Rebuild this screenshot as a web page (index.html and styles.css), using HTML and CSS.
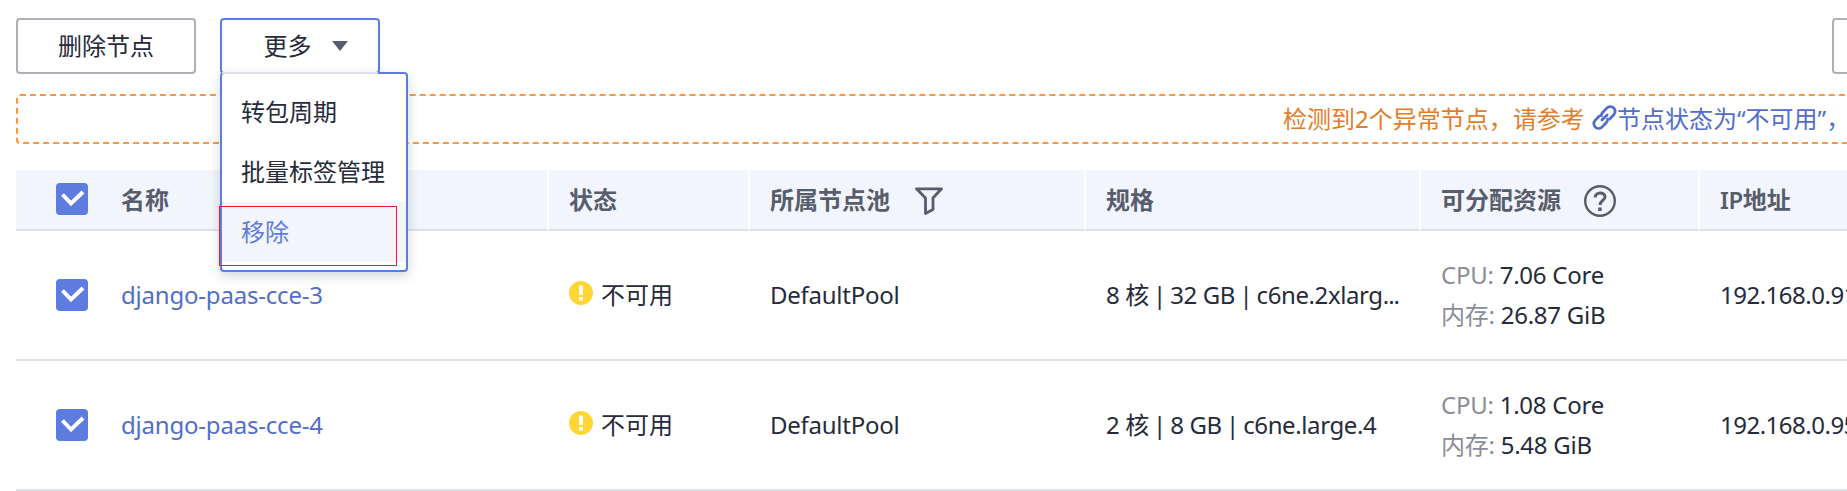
FILE: index.html
```
<!DOCTYPE html>
<html lang="zh-CN">
<head>
<meta charset="utf-8">
<title>节点管理</title>
<link rel="stylesheet" href="styles.css">
</head>
<body>
<svg class="defs" width="0" height="0">
  <symbol id="check" viewBox="0 0 32 32"><path d="M6.500 11.500l8.500 9 12-11.500" fill="none" stroke="#fff" stroke-width="4"/></symbol>
  <symbol id="warn" viewBox="0 0 24 24"><circle cx="12" cy="12" r="12" fill="#ffd735"/><path d="M10.100 4.500h3.800v9.500h-3.800zM10.100 16h3.800v3.500h-3.800z" fill="#fff"/></symbol>
</svg>
<main class="page">
  <div class="toolbar">
    <button class="btn btn-delete">删除节点</button>
    <div class="dropdown">
      <button class="btn btn-more">更多<svg class="caret" viewBox="0 0 16 10"><path d="M0 0h16L8 10z" fill="#575d6c"/></svg></button>
      <div class="menu">
        <div class="menu-item">转包周期</div>
        <div class="menu-item">批量标签管理</div>
        <div class="menu-item active">移除</div>
        <div class="highlight"></div>
      </div>
    </div>
    <button class="btn btn-right" aria-label="操作"></button>
  </div>
  <div class="notice"><span class="notice-text">检测到2个异常节点，请参考</span><svg class="link-icon" viewBox="0 0 24 24"><g fill="none" stroke="#526ecc" stroke-width="2.700" stroke-linecap="round" stroke-linejoin="round"><path d="M9 10.500a4.500 4.500 0 0 1 1.200-3.300l4-4.200a4.200 4.200 0 0 1 6.800 6.200l-4 4.200"/><path d="M15 13.500a4.500 4.500 0 0 1-1.200 3.300l-4 4.200a4.200 4.200 0 0 1-6.800-6.200l4-4.200"/><path d="M9.500 14.500l5-5"/></g></svg><a class="notice-link">节点状态为“不可用”，</a></div>
  <div class="table">
    <div class="row head">
      <div class="cell first"><svg class="checkbox"><use href="#check"/></svg><span>名称</span></div>
      <div class="cell">状态</div>
      <div class="cell">所属节点池<svg class="filter" viewBox="0 0 28 28"><path d="M1.500 1.800h25l-8.500 9.200v11.500l-7.500 4v-15.500z" fill="none" stroke="#575d6c" stroke-width="2.800" stroke-linejoin="round"/></svg></div>
      <div class="cell">规格</div>
      <div class="cell"><span>可分配资源</span><svg class="help" viewBox="0 0 32 32"><g fill="none" stroke="#575d6c" stroke-width="2.400"><circle cx="16" cy="16" r="14.800"/><path d="M11.200 12.500c0-6 9.800-5.800 9.800-.5 0 3.500-5 3.500-5 8" stroke-width="3"/></g><path d="M14.200 22.500h3.500v3.500h-3.500z" fill="#575d6c"/></svg></div>
      <div class="cell"><span class="latin">IP</span>地址</div>
    </div>
    <div class="row">
      <div class="cell first"><svg class="checkbox"><use href="#check"/></svg><a class="name">django-paas-cce-3</a></div>
      <div class="cell"><svg class="warn"><use href="#warn"/></svg>不可用</div>
      <div class="cell pool">DefaultPool</div>
      <div class="cell spec"><div>8 核 <span class="bar">|</span> 32 GB <span class="bar">|</span> c6ne.2xlarg<span class="dots">...</span></div></div>
      <div class="cell resource"><div><span class="label">CPU:</span> 7.06 Core</div><div><span class="label">内存:</span> 26.87 GiB</div></div>
      <div class="cell ip">192.168.0.91</div>
    </div>
    <div class="row">
      <div class="cell first"><svg class="checkbox"><use href="#check"/></svg><a class="name">django-paas-cce-4</a></div>
      <div class="cell"><svg class="warn"><use href="#warn"/></svg>不可用</div>
      <div class="cell pool">DefaultPool</div>
      <div class="cell spec"><div>2 核 <span class="bar">|</span> 8 GB <span class="bar">|</span> c6ne.large.4</div></div>
      <div class="cell resource"><div><span class="label">CPU:</span> 1.08 Core</div><div><span class="label">内存:</span> 5.48 GiB</div></div>
      <div class="cell ip">192.168.0.95</div>
    </div>
  </div>
</main>
</body>
</html>
```
FILE: styles.css
```
* { box-sizing: border-box; }
body {
  margin: 0;
  overflow: hidden;
  background: #fff;
  color: #252b3a;
  font: 24px/40px "Noto Sans", "Noto Sans CJK SC", sans-serif;
  white-space: nowrap;
}
.defs { position: absolute; }
.page { width: 1847px; height: 491px; padding: 18px 0 0 16px; overflow: hidden; }
.toolbar { display: flex; height: 56px; }
.btn {
  display: flex;
  align-items: center;
  justify-content: center;
  height: 56px;
  padding: 0;
  border: 2px solid #adb0b8;
  border-radius: 4px;
  background: #fff;
  color: #252b3a;
  font: inherit;
}
.btn-delete { width: 180px; }
.dropdown { position: relative; margin-left: 24px; }
.btn-more { width: 160px; padding-left: 11px; border-color: #5e7ce0; }
.caret { width: 16px; height: 10px; margin-left: 20px; }
.btn-right { width: 120px; margin-left: auto; margin-right: -105px; flex: none; }
.menu {
  position: absolute;
  z-index: 2;
  top: 54px;
  left: 0;
  width: 188px;
  height: 200px;
  padding: 8px 0;
  border: 2px solid #5e7ce0;
  border-radius: 4px;
  background: #fff;
  box-shadow: 0 4px 12px rgba(37, 43, 58, .2);
}
.menu::before {
  content: "";
  position: absolute;
  top: -2px;
  left: 0;
  width: 156px;
  height: 2px;
  background: #dfe1e6;
}
.menu-item { height: 60px; padding-left: 19px; line-height: 60px; }
.menu-item.active { background: #f2f5fc; color: #5e7ce0; }
.highlight {
  position: absolute;
  top: 132px;
  left: -3px;
  width: 178px;
  height: 60px;
  border: 1px solid #ed1c24;
}
.notice {
  display: flex;
  align-items: center;
  width: 3000px;
  height: 50px;
  margin-top: 20px;
  padding-left: 1265px;
  border: 2px dashed #fa9841;
  border-radius: 4px;
}
.notice-text { width: 306px; color: #e37d29; }
.notice-link { color: #526ecc; }
.link-icon { flex: none; width: 25px; height: 25px; margin: -4px 0 0 3px; }
.table { margin-top: 26px; }
.row {
  display: grid;
  grid-template-columns: 533px 201px 336px 335px 279px 200px;
  height: 130px;
  border-bottom: 2px solid #dfe1e6;
}
.cell { display: flex; align-items: center; min-width: 0; padding-left: 20px; }
.first { padding-left: 40px; }
.head { height: 61px; border: 0; color: #575d6c; font-weight: 700; }
.head .cell {
  position: relative;
  border-bottom: 2px solid #dfe1e6;
  border-right: 2px solid #fff;
  background: #f2f5fc;
}
.checkbox { width: 32px; height: 32px; margin-right: 33px; border-radius: 4px; background: #5e7ce0; }
.head .checkbox { margin-top: -2px; }
.name { color: #526ecc; letter-spacing: -.2px; }
.pool { letter-spacing: -.25px; }
.spec { letter-spacing: -.4px; }
.bar { margin: 0 -1.5px; }
.dots { letter-spacing: -1px; }
.ip { letter-spacing: -.5px; }
.latin { font-weight: 600; letter-spacing: -.4px; }
.warn { width: 24px; height: 24px; margin-right: 8px; margin-top: -4px; }
.filter { width: 28px; height: 28px; margin-left: 25px; margin-top: 3px; }
.help { width: 32px; height: 32px; margin-left: 23px; margin-top: 2px; }
.resource { flex-direction: column; align-items: flex-start; justify-content: center; letter-spacing: -.25px; }
.label { color: #8a8e99; }
```
